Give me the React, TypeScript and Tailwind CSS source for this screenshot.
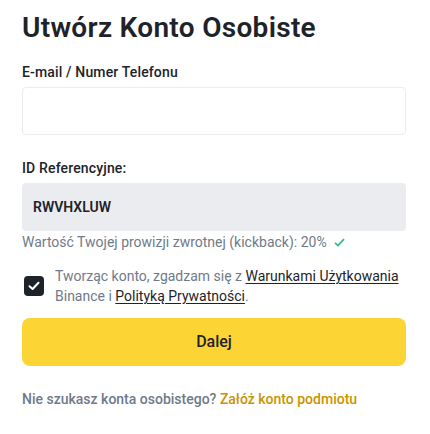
import React from "react";

export default function App() {
  const font = { fontFamily: 'Roboto, "Liberation Sans", sans-serif' };
  return (
    <div className="w-[430px] h-[434px] bg-white px-[22px] pt-[10px]" style={font}>
      <h1 className="text-[28px] leading-[36px] font-semibold text-[#1E2329] tracking-[0.3px]">
        Utwórz Konto Osobiste
      </h1>
      <div className="mt-[17px] text-[14px] leading-[18px] font-medium text-[#1E2329] tracking-[0.15px]">
        E-mail / Numer Telefonu
      </div>
      <div className="mt-[6px] h-[48px] w-[384px] rounded-[4px] border border-[#EAECEF] bg-white" />
      <div className="mt-[24px] text-[14px] leading-[18px] font-medium text-[#1E2329] tracking-[0.15px]">
        ID Referencyjne:
      </div>
      <div className="mt-[6px] h-[48px] w-[384px] rounded-[4px] bg-[#EAECEF] flex items-center px-[11px]">
        <span className="text-[14px] font-semibold text-[#1E2329]">RWVHXLUW</span>
      </div>
      <div className="mt-[1px] flex items-center text-[14px] leading-[20px] text-[#707A8A]">
        <span>Wartość Twojej prowizji zwrotnej (kickback): 20%</span>
        <svg className="ml-[7px]" width="11" height="9" viewBox="0 0 11 9" fill="none">
          <path d="M1 4.8 L4 7.6 L10 1.2" stroke="#2EBD85" strokeWidth="1.8" />
        </svg>
      </div>
      <div className="mt-[14px] flex items-center">
        <div className="ml-[2px] w-[20px] h-[20px] rounded-[4px] bg-[#1E2329] flex items-center justify-center shrink-0">
          <svg width="12" height="10" viewBox="0 0 12 10" fill="none">
            <path d="M1.5 5.2 L4.6 8 L10.5 1.8" stroke="#fff" strokeWidth="2" strokeLinecap="round" strokeLinejoin="round" />
          </svg>
        </div>
        <p className="ml-[11px] text-[14px] leading-[20px] text-[#707A8A]">
          Tworząc konto, zgadzam się z{" "}
          <span className="text-[#1E2329] underline underline-offset-2">Warunkami Użytkowania</span>{" "}
          Binance i <span className="text-[#1E2329] underline underline-offset-2">Polityką Prywatności</span>.
        </p>
      </div>
      <button className="mt-[12px] h-[48px] w-[384px] rounded-[8px] bg-[#FCD535] text-[16px] font-medium text-[#1E2329]">
        Dalej
      </button>
      <div className="mt-[23px] text-[14px] leading-[20px] font-medium text-[#707A8A]">
        Nie szukasz konta osobistego? <span className="text-[#C99400]">Załóż konto podmiotu</span>
      </div>
    </div>
  );
}
